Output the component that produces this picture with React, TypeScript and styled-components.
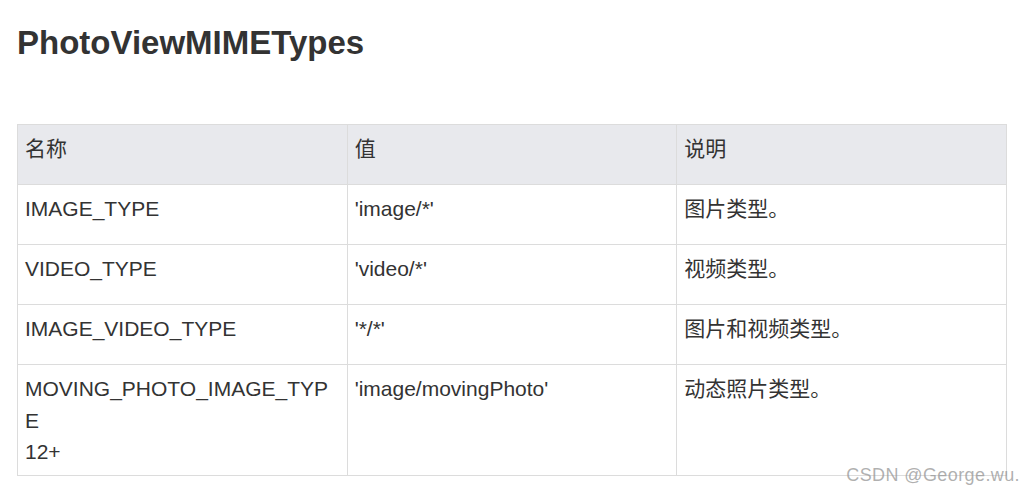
import React from 'react'
import styled, { createGlobalStyle } from 'styled-components'

const GlobalStyle = createGlobalStyle`
body {
  margin: 0;
  background: #fff;
  font-family: "Liberation Sans", Arial, "Noto Sans CJK SC", sans-serif;
  color: #333;
}
`

const Page = styled.div`
position: relative;
width: 1024px;
height: 493px;
padding: 0 17px;
box-sizing: border-box;
overflow: hidden;
`

const Title = styled.h1`
margin: 0;
padding-top: 23px;
height: 124px;
box-sizing: border-box;
font-size: 33px;
line-height: 40px;
font-weight: 700;
color: #333;
`

const Table = styled.table`
width: 990px;
border-collapse: collapse;
table-layout: fixed;
font-size: 21px;
line-height: 31.5px;
`

const HeadCell = styled.th`
background: #e8e9ed;
border: 1px solid #dcdcdc;
height: 60px;
padding: 8px 8px 8px 7px;
box-sizing: border-box;
text-align: left;
vertical-align: top;
font-weight: 400;
`

const Cell = styled.td`
border: 1px solid #dcdcdc;
height: 60px;
padding: 8px 8px 7px 7px;
box-sizing: border-box;
vertical-align: top;
word-break: break-all;
`

const Watermark = styled.div`
position: absolute;
right: 4px;
bottom: 7px;
font-size: 18px;
color: rgba(150, 150, 150, 0.75);
letter-spacing: 0.4px;
`

type Row = { name: React.ReactNode, value: string, desc: string }

const rows: Row[] = [
  { name: 'IMAGE_TYPE', value: "'image/*'", desc: '图片类型。' },
  { name: 'VIDEO_TYPE', value: "'video/*'", desc: '视频类型。' },
  { name: 'IMAGE_VIDEO_TYPE', value: "'*/*'", desc: '图片和视频类型。' },
  {
    name: <>MOVING_PHOTO_IMAGE_TYPE<br />12+</>,
    value: "'image/movingPhoto'",
    desc: '动态照片类型。',
  },
]

export default function App() {
  return <Page>
    <GlobalStyle />
    <Title>PhotoViewMIMETypes</Title>
    <Table>
      <thead>
        <tr>
          <HeadCell>名称</HeadCell>
          <HeadCell>值</HeadCell>
          <HeadCell>说明</HeadCell>
        </tr>
      </thead>
      <tbody>
        {rows.map((r, i) => <tr key={i}>
          <Cell>{r.name}</Cell>
          <Cell>{r.value}</Cell>
          <Cell>{r.desc}</Cell>
        </tr>)}
      </tbody>
    </Table>
    <Watermark>CSDN @George.wu.</Watermark>
  </Page>
}
